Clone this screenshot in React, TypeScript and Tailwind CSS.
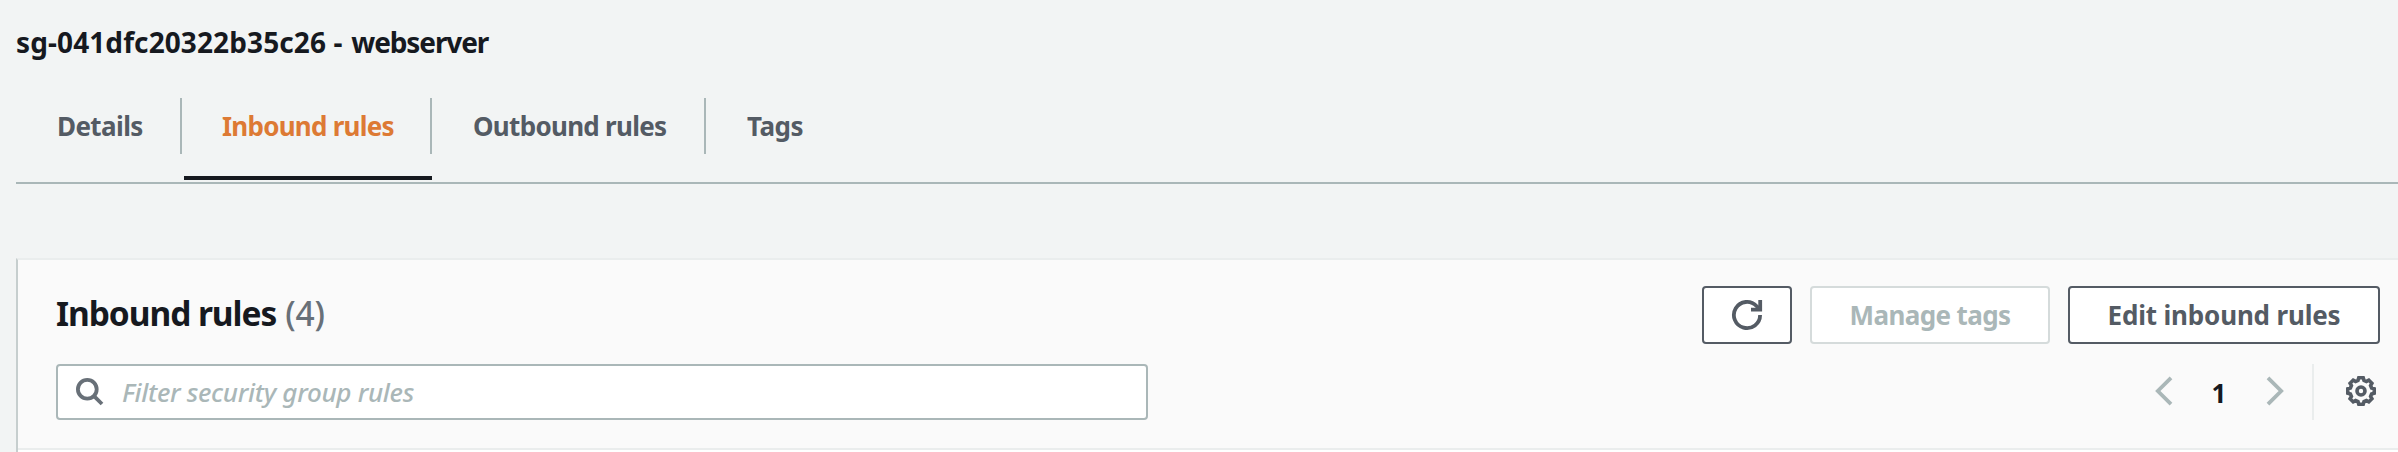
import React from "react";

type Tab = { label: string; box: string; tracking: string };

const tabs: Tab[] = [
  { label: "Details", box: "w-[166px] pl-[41px]", tracking: "tracking-[-0.6px]" },
  { label: "Inbound rules", box: "w-[250px] pl-[40px]", tracking: "tracking-[-0.75px]" },
  { label: "Outbound rules", box: "w-[274px] pl-[41px]", tracking: "tracking-[-0.7px]" },
  { label: "Tags", box: "w-[140px] pl-[41px]", tracking: "tracking-[-0.5px]" },
];

function Tabs({ active }: { active: string }) {
  return (
    <nav className="ml-4 flex h-[116px] border-b-2 border-[#aab7b8]">
      {tabs.map((tab, i) => {
        const selected = tab.label === active;
        return (
          <div key={tab.label} className="flex flex-col">
            <div
              className={`mt-[30px] flex h-[56px] items-center whitespace-nowrap text-[26px] font-bold ${tab.box} ${tab.tracking} ${
                selected ? "text-[#dd7a34]" : "text-[#545b64]"
              } ${i < tabs.length - 1 ? "border-r-2 border-[#aab7b8]" : ""}`}
            >
              {tab.label}
            </div>
            {selected && <div className="mt-[22px] ml-[2px] h-1 bg-[#16191f]" />}
          </div>
        );
      })}
    </nav>
  );
}

function RefreshIcon() {
  return (
    <svg width="32" height="32" viewBox="0 0 32 32" fill="none" stroke="#545b64" strokeWidth="3.8">
      <path d="M29.1 16A13.1 13.1 0 1 1 25.5 7L28.5 10" />
      <path d="M29.2 1v9.6H20" />
    </svg>
  );
}

function SearchIcon() {
  return (
    <svg width="28" height="28" viewBox="0 0 28 28" fill="none" stroke="#687078" strokeWidth="3.8">
      <circle cx="11.3" cy="11.3" r="9.4" />
      <path d="M17.8 17.8l8.2 8.2" />
    </svg>
  );
}

function GearIcon() {
  return (
    <svg width="32" height="32" viewBox="-16 -16 32 32" fill="none" stroke="#545b64">
      <circle r="4" strokeWidth="3.6" />
      <path
        strokeWidth="3.6"
        strokeLinejoin="miter"
        d="M-2.2-13.2H2.2L3-10.6L5.4-9.6L7.8-10.9L10.9-7.8L9.6-5.4L10.6-3L13.2-2.2V2.2L10.6 3L9.6 5.4L10.9 7.8L7.8 10.9L5.4 9.6L3 10.6L2.2 13.2H-2.2L-3 10.6L-5.4 9.6L-7.8 10.9L-10.9 7.8L-9.6 5.4L-10.6 3L-13.2 2.2V-2.2L-10.6-3L-9.6-5.4L-10.9-7.8L-7.8-10.9L-5.4-9.6L-3-10.6Z"
      />
    </svg>
  );
}

function Chevron({ flip = false }: { flip?: boolean }) {
  return (
    <svg width="18" height="30" viewBox="0 0 18 30" fill="none" stroke="#aab7b8" strokeWidth="3.8" className={`mb-[2px] ${flip ? "-scale-x-100" : ""}`}>
      <path d="M16 1.8L2.8 15L16 28.2" />
    </svg>
  );
}

export default function App() {
  return (
    <div className="h-[452px] w-[2398px] overflow-hidden bg-[#f2f4f4] font-['Noto_Sans',sans-serif] text-[#16191f]">
      <h1 className="h-[68px] pt-[23px] pl-4 text-[28px] leading-[38px] font-bold whitespace-pre">
        <span className="tracking-[0.1px]">sg-041dfc20322b35c26 </span>
        <span className="tracking-[0.8px]">- </span>
        <span className="tracking-[-1.1px]">webserver</span>
      </h1>
      <Tabs active="Inbound rules" />
      <section className="mt-[74px] ml-4 h-[200px] border-t-2 border-l-2 border-t-[#eaeded] border-l-[#c6cece] bg-white">
        <header className="h-[190px] border-b-2 border-[#eaeded] bg-[#fafafa] pr-[18px] pl-[38px]">
          <div className="flex justify-between pt-[26px]">
            <h2 className="flex h-[58px] items-center pb-[3px] text-[33.5px] font-bold whitespace-nowrap">
              <span className="tracking-[-1.05px]">Inbound rules</span>
              <span className="ml-[9px] font-medium tracking-[-0.2px] text-[#687078]">(4)</span>
            </h2>
            <div className="flex gap-[18px] text-[26px] font-bold whitespace-nowrap">
              <button className="flex h-[58px] w-[90px] items-center justify-center rounded-[4px] border-2 border-[#545b64] bg-white">
                <RefreshIcon />
              </button>
              <button className="h-[58px] w-[240px] rounded-[4px] border-2 border-[#d5dbdb] bg-white tracking-[-0.6px] text-[#aab7b8]">
                Manage tags
              </button>
              <button className="h-[58px] w-[312px] rounded-[4px] border-2 border-[#545b64] bg-white tracking-[-0.17px] text-[#545b64]">
                Edit inbound rules
              </button>
            </div>
          </div>
          <div className="mt-5 flex justify-between">
            <div className="flex h-[56px] w-[1092px] items-center rounded-[4px] border-2 border-[#aab7b8] bg-white pl-[18px] text-[26px] whitespace-nowrap text-[#aab7b8]">
              <SearchIcon />
              <span className="ml-[18px] font-medium tracking-[-0.3px] italic">Filter security group rules</span>
            </div>
            <div className="flex items-center pr-[3px]">
              <Chevron />
              <span className="mr-px w-[92px] pt-[2px] text-center text-[26px] font-bold">1</span>
              <Chevron flip />
              <div className="ml-[28px] h-[56px] w-[2px] bg-[#eaeded]" />
              <div className="mb-[2px] ml-[31px]">
                <GearIcon />
              </div>
            </div>
          </div>
        </header>
      </section>
    </div>
  );
}
